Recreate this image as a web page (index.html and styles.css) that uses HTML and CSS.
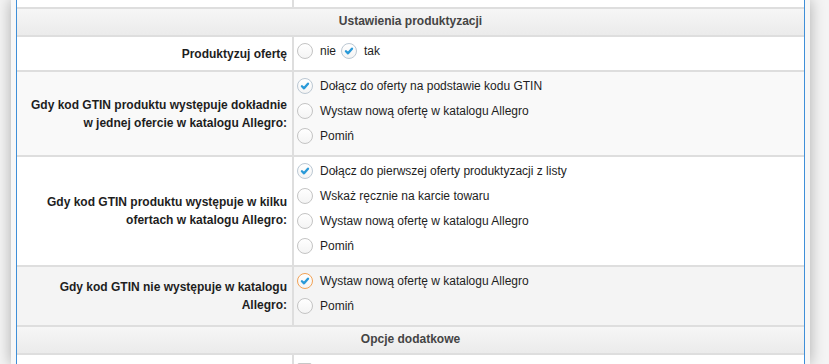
FILE: index.html
```html
<!DOCTYPE html>
<html lang="pl">
<head>
  <meta charset="UTF-8" />
  <title>Ustawienia produktyzacji</title>
  <link rel="stylesheet" href="styles.css">
</head>
<body>

  <div class="window">
    <div class="panel">
      <table class="settings">
        <colgroup>
          <col class="col-label">
          <col>
        </colgroup>

        <tr class="row-tail">
          <td class="label"></td>
          <td class="value"></td>
        </tr>

        <tr class="section">
          <td colspan="2">Ustawienia produktyzacji</td>
        </tr>

        <tr>
          <td class="label">Produktyzuj ofertę</td>
          <td class="value">
            <div class="option inline">
              <span class="radio"></span>
              <span class="text">nie</span>
              <span class="radio checked">
                <svg viewBox="0 0 16 16"><polyline points="4.5,8.3 6.9,10.6 11.4,5.4"/></svg>
              </span>
              <span class="text">tak</span>
            </div>
          </td>
        </tr>

        <tr class="alt">
          <td class="label">Gdy kod GTIN produktu występuje dokładnie w jednej ofercie w katalogu Allegro:</td>
          <td class="value">
            <div class="option">
              <span class="radio checked">
                <svg viewBox="0 0 16 16"><polyline points="4.5,8.3 6.9,10.6 11.4,5.4"/></svg>
              </span>
              <span class="text">Dołącz do oferty na podstawie kodu GTIN</span>
            </div>
            <div class="option">
              <span class="radio"></span>
              <span class="text">Wystaw nową ofertę w katalogu Allegro</span>
            </div>
            <div class="option">
              <span class="radio"></span>
              <span class="text">Pomiń</span>
            </div>
          </td>
        </tr>

        <tr>
          <td class="label">Gdy kod GTIN produktu występuje w kilku ofertach w katalogu Allegro:</td>
          <td class="value">
            <div class="option">
              <span class="radio checked">
                <svg viewBox="0 0 16 16"><polyline points="4.5,8.3 6.9,10.6 11.4,5.4"/></svg>
              </span>
              <span class="text">Dołącz do pierwszej oferty produktyzacji z listy</span>
            </div>
            <div class="option">
              <span class="radio"></span>
              <span class="text">Wskaż ręcznie na karcie towaru</span>
            </div>
            <div class="option">
              <span class="radio"></span>
              <span class="text">Wystaw nową ofertę w katalogu Allegro</span>
            </div>
            <div class="option">
              <span class="radio"></span>
              <span class="text">Pomiń</span>
            </div>
          </td>
        </tr>

        <tr class="hover">
          <td class="label">Gdy kod GTIN nie występuje w katalogu Allegro:</td>
          <td class="value">
            <div class="option">
              <span class="radio checked focus">
                <svg viewBox="0 0 16 16"><polyline points="4.5,8.3 6.9,10.6 11.4,5.4"/></svg>
              </span>
              <span class="text">Wystaw nową ofertę w katalogu Allegro</span>
            </div>
            <div class="option">
              <span class="radio"></span>
              <span class="text">Pomiń</span>
            </div>
          </td>
        </tr>

        <tr class="section">
          <td colspan="2">Opcje dodatkowe</td>
        </tr>

        <tr>
          <td class="label"></td>
          <td class="value">
            <div class="option">
              <span class="checkbox"></span>
            </div>
          </td>
        </tr>
      </table>
    </div>
  </div>

</body>
</html>
```

FILE: styles.css
```css
* {
  box-sizing: border-box;
}

body {
  margin: 0;
  height: 364px;
  overflow: hidden;
  background-color: #f4f4f4;
  font-family: "Liberation Sans", Arial, sans-serif;
  font-size: 12px;
  color: #1e1e1e;
}

.window {
  margin-left: 11px;
  width: 799px;
  height: 364px;
  padding: 0 5px;
  background-color: #f7f7f7;
  box-shadow: 0 0 14px rgba(0, 0, 0, 0.3);
}

.panel {
  height: 100%;
  background-color: #fff;
  border-left: 1px solid #3f8fd8;
  border-right: 1px solid #3f8fd8;
  overflow: hidden;
}

.settings {
  width: 100%;
  border-collapse: separate;
  border-spacing: 0;
  table-layout: fixed;
}

.col-label {
  width: 277px;
}

.settings td {
  border-bottom: 2px solid #dedede;
  padding: 0;
}

.settings td.label {
  border-right: 2px solid #dedede;
  padding: 0 5px 0 10px;
  text-align: right;
  vertical-align: middle;
  font-weight: bold;
  line-height: 18px;
}

.settings td.value {
  padding: 4px 0 4px 3px;
  vertical-align: top;
}

.row-tail td,
.row-tail td.value {
  height: 9px;
  padding: 0;
}

.section td {
  padding: 4px 0 6px 0;
  line-height: 16px;
  text-align: center;
  font-weight: bold;
  color: #444;
  background: linear-gradient(#f6f6f6, #ebebeb);
}

.alt td {
  background-color: #f9f9f9;
}

.hover td {
  background-color: #f4f4f4;
}

.option {
  display: flex;
  align-items: center;
  height: 19px;
  margin-bottom: 6px;
}

.option .text {
  margin-left: 7px;
  margin-right: 5px;
  white-space: nowrap;
}

.radio {
  width: 16px;
  height: 16px;
  flex: none;
  border: 1px solid #c4c4c4;
  border-radius: 50%;
  background: linear-gradient(#fff, #f4f4f4);
}

.radio svg {
  display: block;
  width: 14px;
  height: 14px;
}

.radio svg polyline {
  fill: none;
  stroke: #2a9ad8;
  stroke-width: 2.7;
  stroke-linecap: round;
  stroke-linejoin: round;
}

.radio.checked {
  border-color: #bcc8d3;
}

.radio.focus {
  border-color: #f2a255;
}

.checkbox {
  width: 15px;
  height: 15px;
  margin-top: 3px;
  border: 1px solid #c8c8c8;
  border-radius: 2px;
  background-color: #fff;
}
```
